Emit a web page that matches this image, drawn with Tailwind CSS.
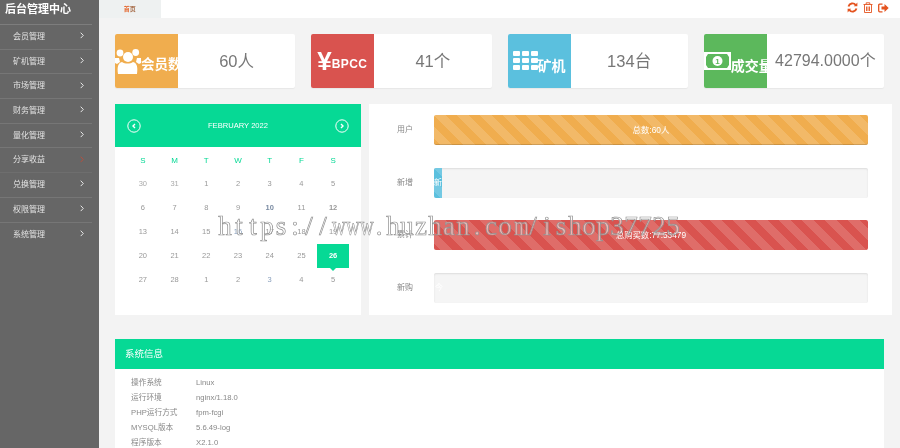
<!DOCTYPE html>
<html lang="zh">
<head>
<meta charset="utf-8">
<script src="https://cdn.jsdelivr.net/npm/@tailwindcss/browser@4"></script>
</head>
<body class="m-0">
<div class="relative flex w-[900px] h-[448px] overflow-hidden bg-[#f3f3f3] font-['Liberation_Sans','Noto_Sans_CJK_SC',sans-serif] blur-[0.3px]">
  <aside class="w-[98.500px] shrink-0 bg-[#666] text-[#e2e2e2] text-[8px]">
    <div class="h-[25px] pl-[5px] pt-[1px] text-[11px] leading-[16px] font-bold text-white border-b border-[#7d7d7d] w-[92px]">后台管理中心</div>
    <div class="w-[92px] h-[24.7px] pl-[13px] pr-[8px] flex items-center justify-between border-b border-[#767676]"><span>会员管理</span><svg class="w-[4px] h-[7px] -mt-[2px]" viewBox="0 0 4 7" fill="none" stroke="#e8e8e8"><path d="M.7.7 3.3 3.4.7 6.1"/></svg></div>
    <div class="w-[92px] h-[24.7px] pl-[13px] pr-[8px] flex items-center justify-between border-b border-[#767676]"><span>矿机管理</span><svg class="w-[4px] h-[7px] -mt-[2px]" viewBox="0 0 4 7" fill="none" stroke="#e8e8e8"><path d="M.7.7 3.3 3.4.7 6.1"/></svg></div>
    <div class="w-[92px] h-[24.7px] pl-[13px] pr-[8px] flex items-center justify-between border-b border-[#767676]"><span>市场管理</span><svg class="w-[4px] h-[7px] -mt-[2px]" viewBox="0 0 4 7" fill="none" stroke="#e8e8e8"><path d="M.7.7 3.3 3.4.7 6.1"/></svg></div>
    <div class="w-[92px] h-[24.7px] pl-[13px] pr-[8px] flex items-center justify-between border-b border-[#767676]"><span>财务管理</span><svg class="w-[4px] h-[7px] -mt-[2px]" viewBox="0 0 4 7" fill="none" stroke="#e8e8e8"><path d="M.7.7 3.3 3.4.7 6.1"/></svg></div>
    <div class="w-[92px] h-[24.7px] pl-[13px] pr-[8px] flex items-center justify-between border-b border-[#767676]"><span>量化管理</span><svg class="w-[4px] h-[7px] -mt-[2px]" viewBox="0 0 4 7" fill="none" stroke="#e8e8e8"><path d="M.7.7 3.3 3.4.7 6.1"/></svg></div>
    <div class="w-[92px] h-[24.7px] pl-[13px] pr-[8px] flex items-center justify-between border-b border-[#6e6e6e]"><span>分享收益</span><svg class="w-[4px] h-[7px] -mt-[2px]" viewBox="0 0 4 7" fill="none" stroke="#b5503f"><path d="M.7.7 3.3 3.4.7 6.1"/></svg></div>
    <div class="w-[92px] h-[24.7px] pl-[13px] pr-[8px] flex items-center justify-between border-b border-[#767676]"><span>兑换管理</span><svg class="w-[4px] h-[7px] -mt-[2px]" viewBox="0 0 4 7" fill="none" stroke="#e8e8e8"><path d="M.7.7 3.3 3.4.7 6.1"/></svg></div>
    <div class="w-[92px] h-[24.7px] pl-[13px] pr-[8px] flex items-center justify-between border-b border-[#767676]"><span>权限管理</span><svg class="w-[4px] h-[7px] -mt-[2px]" viewBox="0 0 4 7" fill="none" stroke="#e8e8e8"><path d="M.7.7 3.3 3.4.7 6.1"/></svg></div>
    <div class="w-[92px] h-[24.7px] pl-[13px] pr-[8px] flex items-center justify-between"><span>系统管理</span><svg class="w-[4px] h-[7px] -mt-[2px]" viewBox="0 0 4 7" fill="none" stroke="#e8e8e8"><path d="M.7.7 3.3 3.4.7 6.1"/></svg></div>
  </aside>

  <main class="flex-1 min-w-0">
    <header class="h-[18px] bg-white flex items-start justify-between">
      <div class="w-[62.500px] h-[18px] bg-[#eef1f1] flex items-center justify-center text-[6px] text-[#a9714f] font-bold">
        <span class="text-[#e4682f]">首</span><span>页</span>
      </div>
      <div class="flex items-center gap-[5px] pr-[11px] pt-[1px] h-[14px]">
        <svg class="w-[11px] h-[11px]" viewBox="0 0 11 11" fill="none" stroke="#e4531f" stroke-width="1.9"><path d="M1.5 4.4A4.1 4.1 0 0 1 8.7 3"/><path d="M9.5 6.6A4.1 4.1 0 0 1 2.3 8"/><path d="M10.4.6v3.7H6.8z" fill="#e4531f" stroke="none"/><path d="M.6 10.4V6.7h3.6z" fill="#e4531f" stroke="none"/></svg>
        <svg class="w-[10px] h-[11px]" viewBox="0 0 10 11" fill="none" stroke="#e4531f"><path d="M.5 2.5h9M3.2 2.3V.8h3.6v1.5M1.5 2.5v8h7v-8M3.5 4.5v4.5M5 4.5v4.5M6.5 4.5v4.5" stroke-width=".9"/></svg>
        <svg class="w-[11px] h-[10px]" viewBox="0 0 11 10"><path d="M4.5 1.2H1.7C1 1.2.7 1.7.7 2.3v5.4c0 .6.3 1.1 1 1.1h2.8" fill="none" stroke="#e4531f" stroke-width="1.3"/><path d="M3.5 3.6h3V1l4.2 4-4.2 4V6.4h-3z" fill="#e4531f"/></svg>
      </div>
    </header>

    <div class="pl-[16.500px] pt-[16px]">
      <section class="w-[769px] grid grid-cols-4 gap-[16px]">
        <div class="h-[54px] bg-white flex rounded-[2px] shadow-[0_1px_1px_rgba(0,0,0,0.05)]">
          <div class="w-[63px] shrink-0 bg-[#f0ad4e] rounded-l-[2px] overflow-hidden flex items-center text-white font-bold whitespace-nowrap">
            <svg class="w-[26px] h-[25px] shrink-0" viewBox="0 0 26 25" fill="#fff"><circle cx="5" cy="4" r="3.400"/><circle cx="20.700" cy="3.500" r="3.400"/><circle cx="13" cy="8" r="5"/><path d="M0 9h4l1 4-3 2-2-1zM26 9h-4l-1 4 3 2 2-1z"/><path d="M3 25c-1-7 0-11 4-12 3 2 8 2 11 0 4 1 5 5 4 12z"/></svg>
            <span class="text-[13.500px] mt-[8px]">会员数</span>
          </div>
          <div class="flex-1 flex items-center justify-center text-[16.500px] text-[#777]">60人</div>
        </div>
        <div class="h-[54px] bg-white flex rounded-[2px] shadow-[0_1px_1px_rgba(0,0,0,0.05)]">
          <div class="w-[63px] shrink-0 bg-[#d9534f] rounded-l-[2px] overflow-hidden flex items-center text-white font-bold whitespace-nowrap pl-[6px]">
            <span class="text-[26px] leading-none -mt-[1px]">¥</span><span class="text-[12px] mt-[6px] tracking-[0.4px]">BPCC</span>
          </div>
          <div class="flex-1 flex items-center justify-center text-[16.500px] text-[#777]">41个</div>
        </div>
        <div class="h-[54px] bg-white flex rounded-[2px] shadow-[0_1px_1px_rgba(0,0,0,0.05)]">
          <div class="w-[63px] shrink-0 bg-[#5bc0de] rounded-l-[2px] overflow-hidden flex items-center text-white font-bold whitespace-nowrap pl-[5px]">
            <svg class="w-[25px] h-[20px] shrink-0" viewBox="0 0 25 20" fill="#fff"><rect x="0" y="0" width="7" height="5" rx="1"/><rect x="9" y="0" width="7" height="5" rx="1"/><rect x="18" y="0" width="7" height="5" rx="1"/><rect x="0" y="7" width="7" height="5" rx="1"/><rect x="9" y="7" width="7" height="5" rx="1"/><rect x="18" y="7" width="7" height="5" rx="1"/><rect x="0" y="14" width="7" height="5" rx="1"/><rect x="9" y="14" width="7" height="5" rx="1"/><rect x="18" y="14" width="7" height="5" rx="1"/></svg>
            <span class="text-[14px] mt-[10px]">矿机</span>
          </div>
          <div class="flex-1 flex items-center justify-center text-[16.500px] text-[#777]">134台</div>
        </div>
        <div class="h-[54px] bg-white flex rounded-[2px] shadow-[0_1px_1px_rgba(0,0,0,0.05)]">
          <div class="w-[63px] shrink-0 bg-[#5cb85c] rounded-l-[2px] overflow-hidden flex items-center text-white font-bold whitespace-nowrap">
            <svg class="w-[27px] h-[18px] shrink-0" viewBox="0 0 27 18"><rect width="27" height="18" fill="#fff"/><path d="M4 2h19l2 3v8l-2 3H4l-2-3V5z" fill="#5cb85c"/><circle cx="13.500" cy="9" r="5" fill="#fff"/><text x="13.500" y="12" text-anchor="middle" font-size="8" font-weight="700" fill="#5cb85c">1</text></svg>
            <span class="text-[14px] mt-[10px]">成交量</span>
          </div>
          <div class="flex-1 flex items-center justify-center text-[16px] text-[#777] whitespace-nowrap">42794.0000个</div>
        </div>
      </section>

      <section class="w-[777px] mt-[16px] flex gap-[8px]">
        <div class="w-[246px] h-[211px] bg-white shrink-0 text-[7.500px] text-[#999]">
          <div class="h-[43px] bg-[#06d995] flex items-center justify-between px-[12px] text-white text-[7.600px]">
            <svg class="w-[14px] h-[14px]" viewBox="0 0 14 14" fill="none" stroke="#fff"><circle cx="7" cy="7" r="6.200"/><path d="M8 5 6 7l2 2" stroke-width="1.400"/></svg>
            <span>FEBRUARY 2022</span>
            <svg class="w-[14px] h-[14px]" viewBox="0 0 14 14" fill="none" stroke="#fff"><circle cx="7" cy="7" r="6.200"/><path d="m6 5 2 2-2 2" stroke-width="1.400"/></svg>
          </div>
          <div class="mt-[1px] mx-[12px] grid grid-cols-7 auto-rows-[24px] items-center text-center">
            <span class="translate-y-[1px] text-[#06d995] h-[24px] leading-[24px] text-[8px]">S</span><span class="translate-y-[1px] text-[#06d995] text-[8px]">M</span><span class="translate-y-[1px] text-[#06d995] text-[8px]">T</span><span class="translate-y-[1px] text-[#06d995] text-[8px]">W</span><span class="translate-y-[1px] text-[#06d995] text-[8px]">T</span><span class="translate-y-[1px] text-[#06d995] text-[8px]">F</span><span class="translate-y-[1px] text-[#06d995] text-[8px]">S</span>
            <span class="text-[#aaa]">30</span><span class="text-[#aaa]">31</span><span>1</span><span>2</span><span>3</span><span>4</span><span>5</span>
            <span>6</span><span>7</span><span>8</span><span>9</span><span class="text-[#7b8ca3] font-bold">10</span><span>11</span><span class="font-bold">12</span>
            <span>13</span><span>14</span><span>15</span><span class="text-[#8aa0bd]">16</span><span>17</span><span>18</span><span>19</span>
            <span>20</span><span>21</span><span>22</span><span>23</span><span>24</span><span>25</span>
            <span class="relative h-[24px] leading-[24px] bg-[#06d995] text-white font-bold after:absolute after:left-1/2 after:top-full after:-ml-[3px] after:border-x-[3px] after:border-t-[3px] after:border-x-transparent after:border-t-[#06d995]">26</span>
            <span>27</span><span>28</span><span>1</span><span>2</span><span class="text-[#8aa0bd]">3</span><span>4</span><span>5</span>
          </div>
        </div>

        <div class="flex-1 h-[211px] bg-white pt-[11px] pl-[28px] pr-[24px] flex flex-col gap-[22.700px] text-[8px] text-[#888]">
          <div class="flex items-center h-[30px]">
            <span class="w-[37px] shrink-0">用户</span>
            <div class="flex-1 h-[30px] rounded-[2px] flex items-center justify-center text-[8.400px] text-white bg-[#f0ad4e] bg-[linear-gradient(45deg,rgba(255,255,255,.15)_25%,transparent_25%,transparent_50%,rgba(255,255,255,.15)_50%,rgba(255,255,255,.15)_75%,transparent_75%)] bg-size-[23px_23px] shadow-[inset_0_-1px_0_rgba(0,0,0,0.15)]">总数:60人</div>
          </div>
          <div class="flex items-center h-[30px]">
            <span class="w-[37px] shrink-0">新增</span>
            <div class="flex-1 h-[30px] rounded-[2px] bg-[#f5f5f5] shadow-[inset_0_1px_2px_rgba(0,0,0,0.1)] overflow-hidden">
              <div class="w-[8px] h-full overflow-hidden flex items-center justify-center whitespace-nowrap text-white bg-[#5bc0de] bg-[linear-gradient(45deg,rgba(255,255,255,.15)_25%,transparent_25%,transparent_50%,rgba(255,255,255,.15)_50%,rgba(255,255,255,.15)_75%,transparent_75%)] bg-size-[23px_23px]">新</div>
            </div>
          </div>
          <div class="flex items-center h-[30px]">
            <span class="w-[37px] shrink-0">累计</span>
            <div class="flex-1 h-[30px] rounded-[2px] flex items-center justify-center text-[8.300px] text-white bg-[#d9534f] bg-[linear-gradient(45deg,rgba(255,255,255,.15)_25%,transparent_25%,transparent_50%,rgba(255,255,255,.15)_50%,rgba(255,255,255,.15)_75%,transparent_75%)] bg-size-[23px_23px]">总购买数:77.53479</div>
          </div>
          <div class="flex items-center h-[30px]">
            <span class="w-[37px] shrink-0">新购</span>
            <div class="flex-1 h-[30px] rounded-[2px] bg-[#f5f5f5] shadow-[inset_0_1px_2px_rgba(0,0,0,0.1)] flex items-center text-white pl-[1px]">今</div>
          </div>
        </div>
      </section>

      <section class="w-[769px] mt-[24px] bg-white">
        <h2 class="h-[30px] bg-[#06d995] pl-[10px] flex items-center text-[9.500px] font-normal text-white">系统信息</h2>
        <dl class="pt-[6px] pl-[16px] text-[7.700px] leading-[15px] text-[#888]">
          <div class="flex"><dt class="w-[65px]">操作系统</dt><dd>Linux</dd></div>
          <div class="flex"><dt class="w-[65px]">运行环境</dt><dd>nginx/1.18.0</dd></div>
          <div class="flex"><dt class="w-[65px]">PHP运行方式</dt><dd>fpm-fcgi</dd></div>
          <div class="flex"><dt class="w-[65px]">MYSQL版本</dt><dd>5.6.49-log</dd></div>
          <div class="flex"><dt class="w-[65px]">程序版本</dt><dd>X2.1.0</dd></div>
        </dl>
      </section>
    </div>
  </main>

  <div class="absolute left-[218px] top-[211px] flex font-['Liberation_Serif','DejaVu_Serif',serif] text-[27px] leading-[30px] whitespace-nowrap text-white/50 [-webkit-text-stroke:0.7px_#8f8f8f] *:w-[14px] *:text-center *:block"><span>h</span><span>t</span><span>t</span><span>p</span><span>s</span><span>:</span><span>/</span><span>/</span><span class="scale-x-70">w</span><span class="scale-x-70">w</span><span class="scale-x-70">w</span><span>.</span><span>h</span><span>u</span><span>z</span><span>h</span><span>a</span><span>n</span><span>.</span><span>c</span><span>o</span><span class="scale-x-70">m</span><span>/</span><span>i</span><span>s</span><span>h</span><span>o</span><span>p</span><span>3</span><span>7</span><span>7</span><span>2</span><span>5</span></div>
</div>
</body>
</html>
